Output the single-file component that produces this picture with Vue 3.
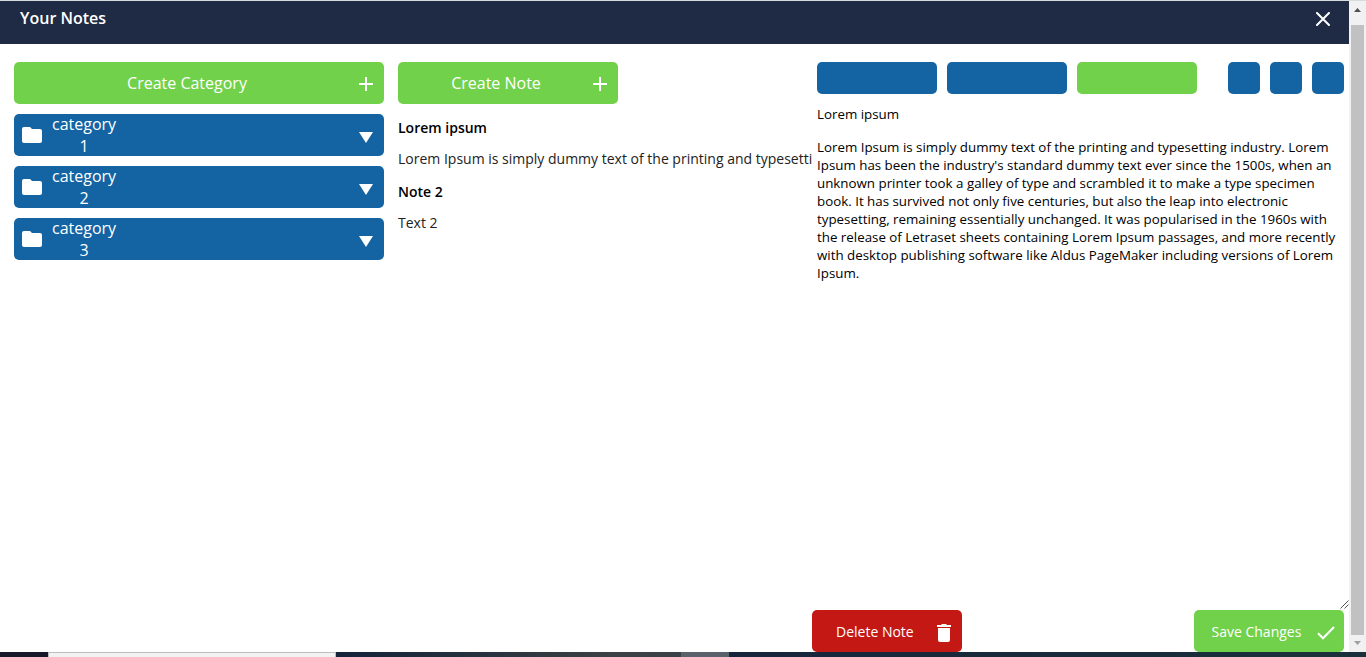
<script setup>
const categories = [1, 2, 3]
const notes = [
  { title: 'Lorem ipsum', text: 'Lorem Ipsum is simply dummy text of the printing and typesetting industry.' },
  { title: 'Note 2', text: 'Text 2' },
]
const lines = [
  'Lorem Ipsum is simply dummy text of the printing and typesetting industry. Lorem',
  "Ipsum has been the industry's standard dummy text ever since the 1500s, when an",
  'unknown printer took a galley of type and scrambled it to make a type specimen',
  'book. It has survived not only five centuries, but also the leap into electronic',
  'typesetting, remaining essentially unchanged. It was popularised in the 1960s with',
  'the release of Letraset sheets containing Lorem Ipsum passages, and more recently',
  'with desktop publishing software like Aldus PageMaker including versions of Lorem',
  'Ipsum.',
]
</script>

<template>
  <div class="screen">
    <div class="window">
      <div class="page">
        <header class="header">
          <span>Your Notes</span>
          <svg width="14" height="14" viewBox="0 0 14 14"><path d="M1 1L13 13M13 1L1 13" stroke="#fff" stroke-width="2" stroke-linecap="round" /></svg>
        </header>
        <main class="main">
          <section class="categories">
            <button class="create">
              <span class="label">Create Category</span>
              <svg width="14" height="14" viewBox="0 0 14 14"><path d="M7 0V14M0 7H14" stroke="#fff" stroke-width="2" /></svg>
            </button>
            <div v-for="n in categories" :key="n" class="category">
              <svg class="folder" width="20" height="16" viewBox="0 0 20 16"><path d="M2 0H8L10 2H18Q20 2 20 4V14Q20 16 18 16H2Q0 16 0 14V2Q0 0 2 0Z" fill="#fff" /></svg>
              <span class="cat-name">category {{ n }}</span>
              <svg class="arrow" width="14" height="11" viewBox="0 0 14 11"><path d="M0 0H14L7 11Z" fill="#fff" /></svg>
            </div>
          </section>
          <section class="notes">
            <button class="create note-create">
              <span class="label">Create Note</span>
              <svg width="14" height="14" viewBox="0 0 14 14"><path d="M7 0V14M0 7H14" stroke="#fff" stroke-width="2" /></svg>
            </button>
            <article v-for="note in notes" :key="note.title" class="note">
              <h3>{{ note.title }}</h3>
              <p>{{ note.text }}</p>
            </article>
          </section>
          <section class="editor">
            <div class="toolbar">
              <i class="tool"></i><i class="tool"></i><i class="tool green"></i>
              <i class="tool small first"></i><i class="tool small"></i><i class="tool small"></i>
            </div>
            <div class="title">Lorem ipsum</div>
            <div class="body">
              <div v-for="line in lines" :key="line">{{ line }}</div>
            </div>
            <svg class="grip" width="9" height="9" viewBox="0 0 9 9"><path d="M.5 8.5L8.5 .5M4.5 8.5L8.5 4.5" stroke="#555" /></svg>
            <div class="actions">
              <button class="action delete">
                <span>Delete Note</span>
                <svg width="14" height="18" viewBox="0 0 14 18"><path d="M0 1H4L5 0H9L10 1H14V3H0ZM1 4H13V16Q13 18 11 18H3Q1 18 1 16Z" fill="#fff" /></svg>
              </button>
              <button class="action save">
                <span>Save Changes</span>
                <svg width="18" height="14" viewBox="0 0 18 14"><path d="M1 7.3L6 12.3L17 1" fill="none" stroke="#fff" stroke-width="2" /></svg>
              </button>
            </div>
          </section>
        </main>
      </div>
      <div class="scrollbar">
        <svg width="7" height="4" viewBox="0 0 7 4"><path d="M0 4L3.5 0L7 4Z" fill="#505050" /></svg>
        <div class="thumb"></div>
        <svg width="7" height="4" viewBox="0 0 7 4"><path d="M0 0H7L3.5 4Z" fill="#a0a0a0" /></svg>
      </div>
    </div>
    <div class="taskbar">
      <i class="start"></i><i class="search"></i><i class="apps"></i><i class="active"></i><i class="rest"></i>
    </div>
  </div>
</template>

<style>
html, body { overflow: hidden; }
</style>

<style scoped>
* { box-sizing: border-box; }
svg { display: block; flex: none; }
.screen {
  width: 1366px; height: 657px; display: flex; flex-direction: column;
  border-top: 1px solid #d5dcdc; background: #fff; overflow: hidden;
  font-family: "Open Sans", sans-serif; color: #000;
}
.window { display: flex; height: 651px; }
.page { width: 1349px; display: flex; flex-direction: column; }
.header {
  height: 43px; background: #1f2a44; color: #fff; display: flex; justify-content: space-between;
  padding: 6px 19px 0 20px; font-size: 16px; font-weight: 600; line-height: 22px;
}
.header svg { margin-top: 5px; }
.main { flex: 1; display: flex; padding-top: 18px; }
button { border: 0; font-family: inherit; color: #fff; margin: 0; }
.categories { width: 370px; margin-left: 14px; display: flex; flex-direction: column; gap: 10px; }
.create {
  width: 100%; height: 42px; background: #72d14a; border-radius: 5px; display: flex; align-items: center;
  padding: 0 11px 0 12px; font-size: 16px; line-height: 22px;
}
.label { flex: 1; text-align: center; padding-right: 11px; }
.create svg { margin-top: 2px; }
.category {
  height: 42px; background: #1464a3; border-radius: 5px; display: flex; align-items: center;
  padding: 0 11px 0 8px; color: #fff;
}
.cat-name { width: 64px; margin-left: 10px; font-size: 16px; line-height: 22px; text-align: center; }
.arrow { margin-left: auto; margin-top: 4px; }
.notes { width: 414px; margin-left: 14px; overflow: hidden; }
.note-create { width: 220px; margin-bottom: 14px; }
.note { height: 64px; white-space: nowrap; }
.note h3 { margin: 0; font-size: 14px; font-weight: 600; line-height: 20px; }
.note p { margin: 11px 0 0; font-size: 14px; line-height: 20px; color: #222; }
.editor { width: 532px; display: flex; flex-direction: column; position: relative; }
.toolbar { display: flex; gap: 10px; padding-left: 5px; }
.tool { width: 120px; height: 32px; border-radius: 5px; background: #1464a3; }
.green { background: #72d14a; }
.small { width: 32px; }
.first { margin-left: 21px; }
.title { margin: 11px 0 0 5px; font-size: 13.333px; line-height: 18px; }
.body { flex: 1; margin: 15px 0 0 5px; font-size: 13.333px; line-height: 18px; white-space: nowrap; }
.grip { position: absolute; right: -5px; bottom: 43px; }
.actions { display: flex; justify-content: space-between; }
.action {
  width: 150px; height: 42px; border-radius: 5px; display: flex; align-items: center;
  justify-content: space-between; padding: 0 11px 0 24px; font-size: 14px; line-height: 20px;
}
.action span { padding-top: 2px; }
.action svg { margin-top: 4px; }
.delete { background: #c41815; }
.save { background: #72d14a; padding: 0 9px 0 17.5px; }
.scrollbar {
  width: 17px; background: #f1f1f1; display: flex; flex-direction: column; align-items: center; padding-top: 7px;
}
.thumb { width: 13px; height: 610px; margin: 13px 0 6px; background: #c1c1c1; }
.taskbar { height: 5px; display: flex; }
.start { width: 48px; background: #191a29; }
.search { width: 288px; background: #f2f2f2; border: 1px solid #bdbdbd; border-bottom: 0; }
.apps { width: 345px; background: linear-gradient(90deg, #14233a, #3b4144 80%, #3a4148); }
.active { width: 48px; background: #59616b; }
.rest { flex: 1; background: linear-gradient(90deg, #17253c, #1b303b); }
</style>
